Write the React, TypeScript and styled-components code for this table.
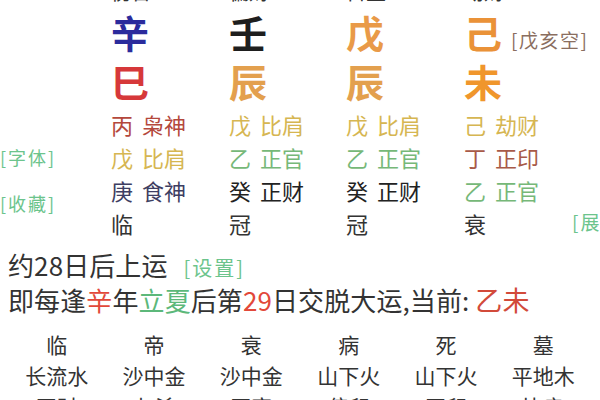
import React from 'react';
import styled, { createGlobalStyle } from 'styled-components';

const Global = createGlobalStyle`
  html, body { margin: 0; padding: 0; background: #fff; }
  body { width: 600px; height: 400px; overflow: hidden; font-family: "Noto Sans CJK SC", "Noto Sans", sans-serif; color: #333; }
`;

const Page = styled.div`
  width: 600px;
  height: 400px;
  overflow: hidden;
  display: flex;
  flex-direction: column;
`;

const PillarArea = styled.div`
  display: flex;
  margin-top: -20px;
`;

const SideCol = styled.div<{ $w: number; $pt: number }>`
  width: ${(p) => p.$w}px;
  flex: none;
  display: flex;
  flex-direction: column;
  gap: 22px;
  padding-top: ${(p) => p.$pt}px;
  white-space: nowrap;
`;

const SideLink = styled.div<{ $size?: number }>`
  font-size: ${(p) => p.$size ?? 18}px;
  line-height: 24px;
  color: #6cc48c;
  letter-spacing: 2px;
`;

const Pillar = styled.div<{ $w: number }>`
  width: ${(p) => p.$w}px;
  flex: none;
  display: flex;
  flex-direction: column;
  white-space: nowrap;
`;

const TopLabel = styled.div`
  font-size: 20px;
  line-height: 24px;
  height: 24px;
  color: #333;
`;

const StemRow = styled.div`
  display: flex;
  align-items: baseline;
  height: 56px;
  line-height: 56px;
`;

const Stem = styled.span<{ $c: string }>`
  font-size: 38px;
  font-weight: 700;
  color: ${(p) => p.$c};
`;

const Note = styled.span`
  font-size: 19px;
  color: #8a6e60;
  margin-left: 9px;
  letter-spacing: 1.5px;
`;

const Branch = styled.div<{ $c: string }>`
  font-size: 38px;
  font-weight: 700;
  line-height: 42px;
  height: 42px;
  color: ${(p) => p.$c};
`;

const HiddenList = styled.div`
  display: flex;
  flex-direction: column;
  margin-top: 6px;
`;

const HiddenRow = styled.div<{ $c: string }>`
  font-size: 22px;
  line-height: 33px;
  height: 33px;
  color: ${(p) => p.$c};
`;

const God = styled.span`
  margin-left: 9px;
`;

const StateText = styled.div`
  font-size: 22px;
  line-height: 33px;
  height: 33px;
  color: #333;
`;

const Info = styled.div`
  padding-left: 8px;
  margin-top: 8px;
  font-size: 26px;
  color: #333;
  white-space: nowrap;
  letter-spacing: 0.1px;
`;

const InfoLine = styled.div<{ $h: number }>`
  line-height: ${(p) => p.$h}px;
  height: ${(p) => p.$h}px;
  display: flex;
  align-items: baseline;
`;

const SetLink = styled.span`
  font-size: 20px;
  color: #6cc48c;
  margin-left: 16px;
  letter-spacing: 2px;
`;

const Hi = styled.span<{ $c: string; $size?: number }>`
  color: ${(p) => p.$c};
  ${(p) => (p.$size ? `font-size: ${p.$size}px;` : '')}
`;

const Table = styled.div`
  display: grid;
  grid-template-columns: repeat(6, 1fr);
  padding: 0 8px;
  margin-top: 10px;
`;

const Cell = styled.div<{ $h: number }>`
  text-align: center;
  font-size: 21px;
  line-height: ${(p) => p.$h}px;
  height: ${(p) => p.$h}px;
  color: #333;
  white-space: nowrap;
`;

const YEL = '#d6b652';
const GRN = '#76b878';

type P = {
  label: string;
  gan: string;
  ganColor: string;
  zhi: string;
  zhiColor: string;
  hidden: [string, string, string][];
  state: string;
  note?: string;
  w: number;
};

const pillars: P[] = [
  {
    label: '伤官', gan: '辛', ganColor: '#2b2b9c', zhi: '巳', zhiColor: '#d6383a',
    hidden: [['丙', '枭神', '#b4483c'], ['戊', '比肩', YEL], ['庚', '食神', '#3e3e62']], state: '临', w: 118,
  },
  {
    label: '偏财', gan: '壬', ganColor: '#1e1e1e', zhi: '辰', zhiColor: '#e3a04e',
    hidden: [['戊', '比肩', YEL], ['乙', '正官', GRN], ['癸', '正财', '#222']], state: '冠', w: 117,
  },
  {
    label: '日主', gan: '戊', ganColor: '#e99a48', zhi: '辰', zhiColor: '#e3a04e',
    hidden: [['戊', '比肩', YEL], ['乙', '正官', GRN], ['癸', '正财', '#222']], state: '冠', w: 118,
  },
  {
    label: '劫财', gan: '己', ganColor: '#ea9238', zhi: '未', zhiColor: '#f0962c',
    hidden: [['己', '劫财', YEL], ['丁', '正印', '#a85a48'], ['乙', '正官', GRN]], state: '衰', note: '[戊亥空]', w: 108,
  },
];

const dayun = [
  ['临', '长流水', '正财'],
  ['帝', '沙中金', '七杀'],
  ['衰', '沙中金', '正官'],
  ['病', '山下火', '偏印'],
  ['死', '山下火', '正印'],
  ['墓', '平地木', '比肩'],
];

export default function App() {
  return (
    <Page>
      <Global />
      <PillarArea>
        <SideCol $w={111} $pt={165}>
          <SideLink>[字体]</SideLink>
          <SideLink>[收藏]</SideLink>
        </SideCol>
        {pillars.map((p, i) => (
          <Pillar key={i} $w={p.w}>
            <TopLabel>{p.label}</TopLabel>
            <StemRow>
              <Stem $c={p.ganColor}>{p.gan}</Stem>
              {p.note && <Note>{p.note}</Note>}
            </StemRow>
            <Branch $c={p.zhiColor}>{p.zhi}</Branch>
            <HiddenList>
              {p.hidden.map(([g, s, c], j) => (
                <HiddenRow key={j} $c={c}>
                  {g}
                  <God>{s}</God>
                </HiddenRow>
              ))}
              <StateText>{p.state}</StateText>
            </HiddenList>
          </Pillar>
        ))}
        <SideCol $w={30} $pt={230}>
          <SideLink $size={19}>[展开]</SideLink>
        </SideCol>
      </PillarArea>
      <Info>
        <InfoLine $h={34}>
          约28日后上运<SetLink>[设置]</SetLink>
        </InfoLine>
        <InfoLine $h={36}>
          即每逢<Hi $c="#e2483a">辛</Hi>年<Hi $c="#5cb87a">立夏</Hi>后第<Hi $c="#e2483a">29</Hi>日交脱大运,当前:&nbsp;<Hi $c="#d24a3a" $size={27}>乙未</Hi>
        </InfoLine>
      </Info>
      <Table>
        {dayun.map((d) => (
          <Cell key={'a' + d[0]} $h={32}>{d[0]}</Cell>
        ))}
        {dayun.map((d, i) => (
          <Cell key={'b' + i} $h={30}>{d[1]}</Cell>
        ))}
        {dayun.map((d, i) => (
          <Cell key={'c' + i} $h={32}>{d[2]}</Cell>
        ))}
      </Table>
    </Page>
  );
}
